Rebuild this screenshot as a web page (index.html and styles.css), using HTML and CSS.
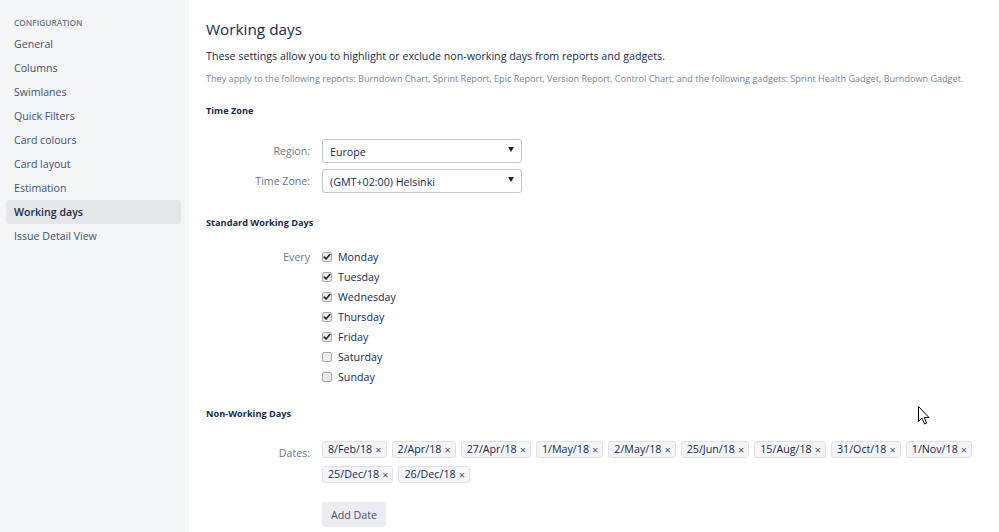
FILE: index.html
```html
<!DOCTYPE html>
<html lang="en">
<head>
<meta charset="utf-8">
<title>Working days</title>
<link rel="stylesheet" href="styles.css">
</head>
<body>
<div class="page">
  <nav class="sidebar">
    <div class="side-heading">Configuration</div>
    <ul class="nav">
      <li class="nav-item">General</li>
      <li class="nav-item">Columns</li>
      <li class="nav-item">Swimlanes</li>
      <li class="nav-item">Quick Filters</li>
      <li class="nav-item">Card colours</li>
      <li class="nav-item">Card layout</li>
      <li class="nav-item">Estimation</li>
      <li class="nav-item active">Working days</li>
      <li class="nav-item">Issue Detail View</li>
    </ul>
  </nav>
  <main class="main">
    <h1 class="title">Working days</h1>
    <p class="intro">These settings allow you to highlight or exclude non-working days from reports and gadgets.</p>
    <p class="note">They apply to the following reports: Burndown Chart, Sprint Report, Epic Report, Version Report, Control Chart; and the following gadgets: Sprint Health Gadget, Burndown Gadget.</p>

    <h2 class="section tz-head">Time Zone</h2>
    <div class="form-grid selects">
      <label class="field-label">Region:</label>
      <div class="select"><span class="select-text">Europe</span><span class="arrow"></span></div>
      <label class="field-label">Time Zone:</label>
      <div class="select"><span class="select-text">(GMT+02:00) Helsinki</span><span class="arrow"></span></div>
    </div>

    <h2 class="section swd-head">Standard Working Days</h2>
    <div class="form-grid days">
      <span class="field-label every">Every</span>
      <ul class="day-list">
        <li class="day"><svg class="cb" viewBox="0 0 10 10"><rect x="0.5" y="0.5" width="9" height="9" rx="1.5" class="cb-box"/><path d="M2.3 5.1 L4.1 7 L7.8 2.6" class="cb-tick"/></svg>Monday</li>
        <li class="day"><svg class="cb" viewBox="0 0 10 10"><rect x="0.5" y="0.5" width="9" height="9" rx="1.5" class="cb-box"/><path d="M2.3 5.1 L4.1 7 L7.8 2.6" class="cb-tick"/></svg>Tuesday</li>
        <li class="day"><svg class="cb" viewBox="0 0 10 10"><rect x="0.5" y="0.5" width="9" height="9" rx="1.5" class="cb-box"/><path d="M2.3 5.1 L4.1 7 L7.8 2.6" class="cb-tick"/></svg>Wednesday</li>
        <li class="day"><svg class="cb" viewBox="0 0 10 10"><rect x="0.5" y="0.5" width="9" height="9" rx="1.5" class="cb-box"/><path d="M2.3 5.1 L4.1 7 L7.8 2.6" class="cb-tick"/></svg>Thursday</li>
        <li class="day"><svg class="cb" viewBox="0 0 10 10"><rect x="0.5" y="0.5" width="9" height="9" rx="1.5" class="cb-box"/><path d="M2.3 5.1 L4.1 7 L7.8 2.6" class="cb-tick"/></svg>Friday</li>
        <li class="day"><svg class="cb" viewBox="0 0 10 10"><rect x="0.5" y="0.5" width="9" height="9" rx="1.5" class="cb-box"/></svg>Saturday</li>
        <li class="day"><svg class="cb" viewBox="0 0 10 10"><rect x="0.5" y="0.5" width="9" height="9" rx="1.5" class="cb-box"/></svg>Sunday</li>
      </ul>
    </div>

    <h2 class="section nwd-head">Non-Working Days</h2>
    <div class="form-grid dates">
      <span class="field-label dates-label">Dates:</span>
      <div class="dates-field">
        <div class="tags">
          <span class="tag">8/Feb/18<span class="x">×</span></span>
          <span class="tag">2/Apr/18<span class="x">×</span></span>
          <span class="tag">27/Apr/18<span class="x">×</span></span>
          <span class="tag">1/May/18<span class="x">×</span></span>
          <span class="tag">2/May/18<span class="x">×</span></span>
          <span class="tag">25/Jun/18<span class="x">×</span></span>
          <span class="tag">15/Aug/18<span class="x">×</span></span>
          <span class="tag">31/Oct/18<span class="x">×</span></span>
          <span class="tag">1/Nov/18<span class="x">×</span></span>
          <span class="tag">25/Dec/18<span class="x">×</span></span>
          <span class="tag">26/Dec/18<span class="x">×</span></span>
        </div>
        <button class="btn">Add Date</button>
      </div>
    </div>
  </main>
</div>
<svg class="cursor" viewBox="0 0 12 19" width="12" height="19"><path d="M0.5 0.5 L0.5 15.5 L4 12.2 L6.5 18 L8.6 17.1 L6.2 11.5 L11 11.5 Z" fill="#fff" stroke="#000" stroke-width="1" stroke-linejoin="round"/></svg>
</body>
</html>
```

FILE: styles.css
```css
* { box-sizing: border-box; }
html, body { margin: 0; padding: 0; }
body {
  font-family: "Open Sans", "Noto Sans", sans-serif;
  color: #172b4d;
  background: #fff;
  width: 999px;
  height: 532px;
  overflow: hidden;
  position: relative;
}
.page {
  display: flex;
  min-height: 532px;
}
.sidebar {
  width: 189px;
  flex: none;
  background: #f4f5f7;
  padding-top: 14px;
}
.side-heading {
  font-size: 8.3px;
  font-weight: 600;
  text-transform: uppercase;
  color: #6b778c;
  line-height: 18px;
  padding-left: 14px;
}
.nav {
  list-style: none;
  margin: 0 8px 0 6px;
  padding: 0;
}
.nav-item {
  font-size: 10.6px;
  line-height: 24px;
  height: 24px;
  padding-left: 8px;
  color: #42526e;
  border-radius: 3px;
}
.nav-item.active {
  background: #e4e6ea;
  color: #172b4d;
  font-weight: 600;
}
.main {
  flex: 1;
  padding: 19px 0 0 17px;
}
.title {
  margin: 0;
  font-size: 15.3px;
  font-weight: 500;
  line-height: 20px;
  color: #172b4d;
}
.intro {
  margin: 9px 0 0;
  font-size: 10.7px;
  line-height: 16px;
}
.note {
  margin: 8px 0 0;
  font-size: 9.1px;
  line-height: 14px;
  color: #7a869a;
  white-space: nowrap;
}
.section {
  margin: 0;
  font-size: 9.2px;
  font-weight: 700;
  line-height: 14px;
  color: #172b4d;
}
.tz-head { margin-top: 18px; }
.swd-head { margin-top: 23px; }
.nwd-head { margin-top: 20px; }
.form-grid {
  display: grid;
  grid-template-columns: 104px 1fr;
  column-gap: 12px;
}
.selects {
  margin-top: 21px;
  row-gap: 6px;
  align-items: center;
}
.field-label {
  text-align: right;
  font-size: 10.6px;
  color: #6b778c;
}
.select {
  width: 200px;
  height: 24px;
  border: 1px solid #c1c7d0;
  border-radius: 3px;
  background: #fff;
  display: flex;
  align-items: center;
  justify-content: space-between;
  padding: 2px 7px 0 7px;
}
.select-text {
  font-size: 10.7px;
  color: #172b4d;
}
.arrow {
  width: 0;
  height: 0;
  border-left: 3px solid transparent;
  border-right: 3px solid transparent;
  border-top: 5px solid #222;
  margin-top: -6px;
}
.days { margin-top: 17px; }
.every { line-height: 20px; }
.day-list {
  list-style: none;
  margin: 0;
  padding: 0;
}
.day {
  display: flex;
  align-items: center;
  height: 20px;
  font-size: 10.7px;
  color: #172b4d;
}
.cb {
  width: 10px;
  height: 10px;
  margin-right: 6px;
  flex: none;
}
.cb-box { fill: #ebebeb; stroke: #a9a9a9; stroke-width: 1; }
.cb-tick { fill: none; stroke: #222; stroke-width: 1.6; stroke-linecap: round; stroke-linejoin: round; }
.dates { margin-top: 20px; }
.dates-label { padding-top: 4px; line-height: 16px; }
.tags {
  display: flex;
  flex-wrap: wrap;
  column-gap: 5px;
  row-gap: 8px;
}
.tag {
  display: inline-flex;
  align-items: center;
  height: 17px;
  padding: 0 4px 0 5px;
  background: #f4f5f7;
  border: 1px solid #dfe1e6;
  border-radius: 3px;
  font-size: 10.7px;
  color: #172b4d;
  line-height: 15px;
}
.x {
  font-size: 11px;
  color: #42526e;
  margin-left: 3px;
}
.btn {
  margin-top: 19px;
  width: 64px;
  height: 25px;
  border: none;
  border-radius: 3px;
  background: #ebecf0;
  color: #42526e;
  font-family: "Open Sans", "Noto Sans", sans-serif;
  font-size: 10.7px;
  padding: 0;
}
.cursor {
  position: absolute;
  left: 918px;
  top: 406px;
}
```
